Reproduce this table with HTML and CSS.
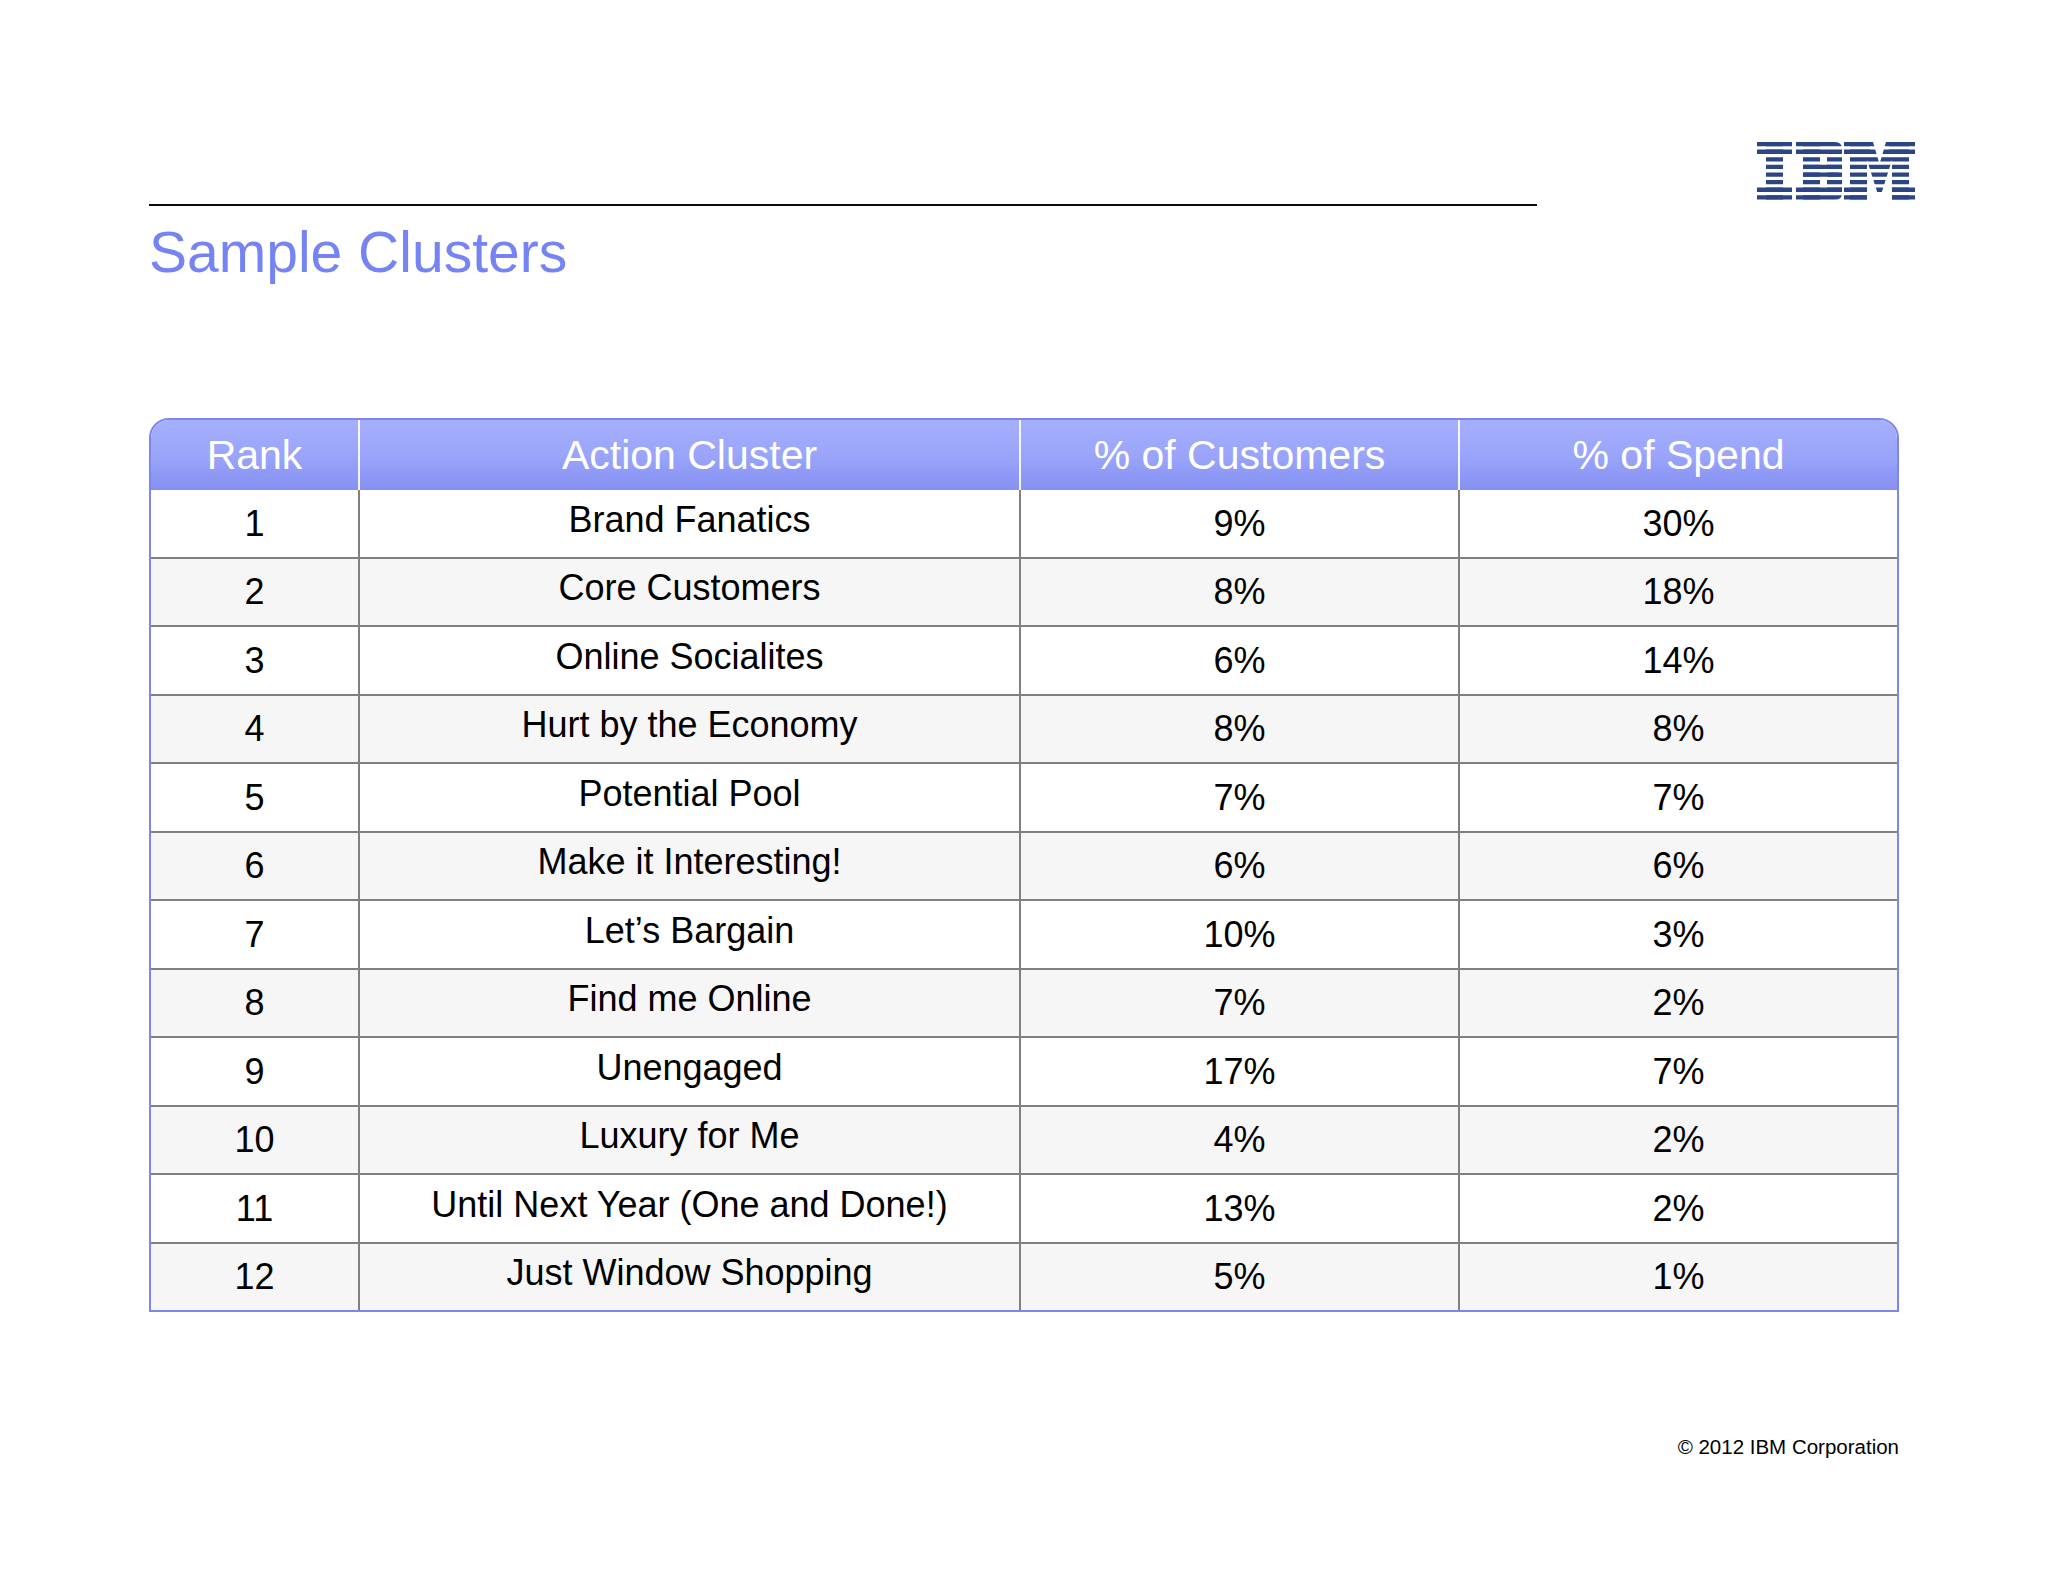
FILE: index.html
```html
<!DOCTYPE html>
<html lang="en">
<head>
<meta charset="utf-8">
<title>Sample Clusters</title>
<link rel="stylesheet" href="styles.css">
</head>
<body>
<div class="slide">
  <header class="top">
    <div class="head-left">
      <div class="rule"></div>
      <h1 class="title">Sample Clusters</h1>
    </div>
    <svg class="logo" width="158" height="58" viewBox="0 0 158 58" aria-label="IBM">
      <defs>
        <clipPath id="stripes">
          <rect x="0" y="0" width="158" height="4.3"/>
          <rect x="0" y="7.6" width="158" height="4.3"/>
          <rect x="0" y="15.2" width="158" height="4.3"/>
          <rect x="0" y="22.8" width="158" height="4.3"/>
          <rect x="0" y="30.4" width="158" height="4.3"/>
          <rect x="0" y="38" width="158" height="4.3"/>
          <rect x="0" y="45.6" width="158" height="4.3"/>
          <rect x="0" y="53.2" width="158" height="4.3"/>
        </clipPath>
      </defs>
      <g clip-path="url(#stripes)" fill="#2c4586">
        <!-- I -->
        <rect x="0" y="0" width="35" height="13"/>
        <rect x="9" y="0" width="17" height="58"/>
        <rect x="0" y="44" width="35" height="14"/>
        <!-- B -->
        <path d="M39 0 H78 Q85 0 85 7 V13 H39 Z"/>
        <rect x="46" y="0" width="17" height="58"/>
        <rect x="70" y="8" width="15" height="42" rx="3"/>
        <path d="M46 22 H85 L81 29 L85 36 H46 Z"/>
        <path d="M39 44 H85 V51 Q85 58 78 58 H39 Z"/>
        <!-- M -->
        <rect x="87" y="0" width="26" height="13"/>
        <rect x="93" y="0" width="17" height="58"/>
        <rect x="87" y="44" width="23" height="14"/>
        <rect x="132" y="0" width="26" height="13"/>
        <rect x="135" y="0" width="17" height="58"/>
        <rect x="135" y="44" width="23" height="14"/>
        <polygon points="110,0 116,0 122.5,22 129,0 135,0 135,18 124.5,51 120.5,51 110,18"/>
      </g>
    </svg>
  </header>

  <div class="tbl">
    <div class="row head">
      <div class="cell">Rank</div>
      <div class="cell">Action Cluster</div>
      <div class="cell">% of Customers</div>
      <div class="cell">% of Spend</div>
    </div>
    <div class="row"><div class="cell">1</div><div class="cell name">Brand Fanatics</div><div class="cell">9%</div><div class="cell">30%</div></div>
    <div class="row alt"><div class="cell">2</div><div class="cell name">Core Customers</div><div class="cell">8%</div><div class="cell">18%</div></div>
    <div class="row"><div class="cell">3</div><div class="cell name">Online Socialites</div><div class="cell">6%</div><div class="cell">14%</div></div>
    <div class="row alt"><div class="cell">4</div><div class="cell name">Hurt by the Economy</div><div class="cell">8%</div><div class="cell">8%</div></div>
    <div class="row"><div class="cell">5</div><div class="cell name">Potential Pool</div><div class="cell">7%</div><div class="cell">7%</div></div>
    <div class="row alt"><div class="cell">6</div><div class="cell name">Make it Interesting!</div><div class="cell">6%</div><div class="cell">6%</div></div>
    <div class="row"><div class="cell">7</div><div class="cell name">Let’s Bargain</div><div class="cell">10%</div><div class="cell">3%</div></div>
    <div class="row alt"><div class="cell">8</div><div class="cell name">Find me Online</div><div class="cell">7%</div><div class="cell">2%</div></div>
    <div class="row"><div class="cell">9</div><div class="cell name">Unengaged</div><div class="cell">17%</div><div class="cell">7%</div></div>
    <div class="row alt"><div class="cell">10</div><div class="cell name">Luxury for Me</div><div class="cell">4%</div><div class="cell">2%</div></div>
    <div class="row"><div class="cell">11</div><div class="cell name">Until Next Year (One and Done!)</div><div class="cell">13%</div><div class="cell">2%</div></div>
    <div class="row alt last"><div class="cell">12</div><div class="cell name">Just Window Shopping</div><div class="cell">5%</div><div class="cell">1%</div></div>
  </div>

  <footer class="copy">© 2012 IBM Corporation</footer>
</div>
</body>
</html>
```

FILE: styles.css
```css
html, body {
  margin: 0;
  padding: 0;
  background: #ffffff;
}

body {
  font-family: "Liberation Sans", Arial, sans-serif;
  color: #000;
}

.slide {
  width: 2048px;
  height: 1582px;
  padding-left: 149px;
  box-sizing: border-box;
}

.top {
  display: flex;
  align-items: flex-start;
}

.head-left {
  width: 1388px;
  padding-top: 204px;
}

.rule {
  height: 2px;
  background: #0a0a0a;
}

.title {
  margin: 18px 0 0 0;
  font-size: 57px;
  line-height: 57px;
  font-weight: normal;
  color: #7584f2;
}

.logo {
  display: block;
  margin-left: 220px;
  margin-top: 142px;
}

.tbl {
  margin-top: 137px;
  width: 1750px;
  box-sizing: border-box;
  border: 2px solid #7c87ee;
  border-radius: 20px 20px 0 0;
  overflow: hidden;
}

.row {
  display: grid;
  grid-template-columns: 209px 661px 439px 1fr;
  height: 69px;
  background: #ffffff;
  border-bottom: 2px solid #808080;
  box-sizing: border-box;
}

.row.alt {
  background: #f6f6f6;
  height: 68px;
}

.row.last {
  border-bottom: none;
  height: 66px;
}

.row.head {
  height: 70px;
  border-bottom: none;
  background: linear-gradient(to bottom, #a6affc 0%, #9aa5fa 50%, #8590f3 100%);
  color: #ffffff;
}

.cell {
  display: flex;
  align-items: center;
  justify-content: center;
  border-right: 2px solid #808080;
  font-size: 36px;
  white-space: nowrap;
}

.row.head .cell {
  font-size: 41px;
  border-right-color: rgba(255, 255, 255, 0.9);
}

.cell:last-child {
  border-right: none;
}

.cell.name {
  padding-bottom: 8px;
}

.copy {
  width: 1750px;
  margin-top: 123px;
  text-align: right;
  font-size: 20.5px;
  color: #000;
}
```
